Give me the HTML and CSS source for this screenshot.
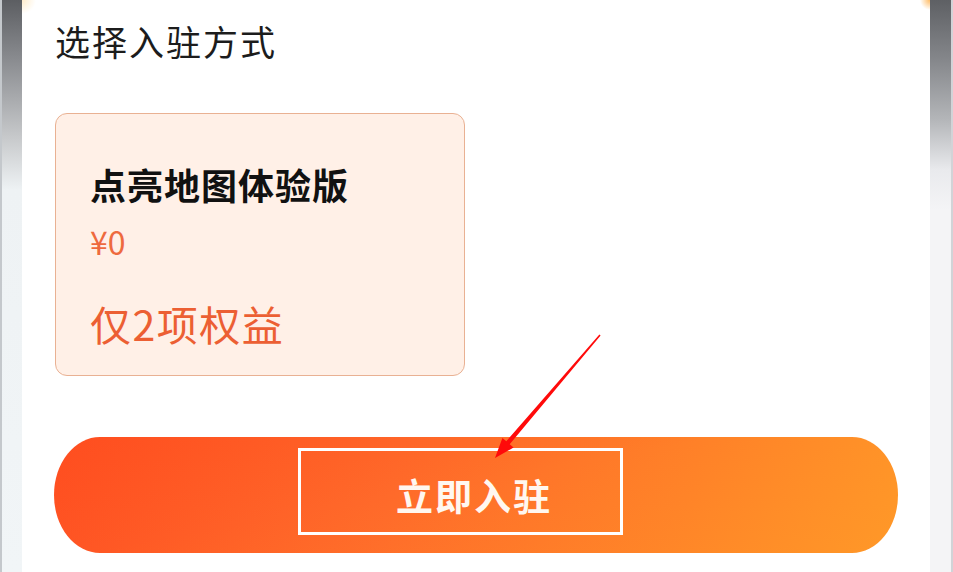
FILE: index.html
```html
<!DOCTYPE html>
<html lang="zh-CN">
<head>
<meta charset="utf-8">
<title>选择入驻方式</title>
<link rel="stylesheet" href="styles.css">
</head>
<body>
<div class="screen">
  <div class="edge edge-left"></div>
  <main class="sheet">
    <h1 class="title">选择入驻方式</h1>
    <div class="plans">
      <div class="plan">
        <div class="plan-name">点亮地图体验版</div>
        <div class="plan-price">¥0</div>
        <div class="plan-note">仅2项权益</div>
      </div>
    </div>
    <button class="cta">
      <span class="cta-text">立即入驻</span>
      <span class="highlight-box"></span>
    </button>
  </main>
  <div class="edge edge-right"></div>
  <svg class="arrow" width="953" height="572" viewBox="0 0 953 572">
    <polygon fill="#ff0a0a" points="495,458 502.4,438.0 506.3,441.3 599.4,334.4 600.6,335.4 509.7,444.3 513.6,447.6"/>
  </svg>
</div>
</body>
</html>
```
FILE: styles.css
```css
* { box-sizing: border-box; }
html, body {
  margin: 0;
  padding: 0;
  width: 953px;
  height: 572px;
  overflow: hidden;
  background: #ffffff;
  font-family: "Noto Sans CJK SC", "Noto Sans", sans-serif;
}
.screen {
  position: relative;
  display: flex;
  width: 953px;
  height: 572px;
}
.edge {
  flex: none;
  height: 572px;
}
.edge-left {
  width: 22px;
  background: linear-gradient(180deg, #5c5e62 0px, #8a8c90 60px, #c9cbcd 140px, #eef2f4 190px, #f1f5f7 572px);
  border-left: 2px solid #c4c8cc;
}
.edge-right {
  width: 23px;
  background: linear-gradient(180deg, #5e6064 0px, #85878b 60px, #b4b6b9 120px, #e9eaed 170px, #f4f4f6 210px, #f4f4f6 572px);
  border-right: 2px solid #d2d3d7;
}
.sheet {
  flex: 1;
  display: flex;
  flex-direction: column;
  padding: 21px 32px 0 33px;
  background:
    radial-gradient(circle at 0 0, rgba(255, 214, 140, 0.45) 0, rgba(255, 240, 210, 0) 14px),
    radial-gradient(circle at 100% 0, rgba(255, 170, 60, 0.8) 0, rgba(255, 230, 190, 0) 10px),
    #ffffff;
}
.title {
  margin: 0;
  font-size: 35px;
  line-height: 40px;
  font-weight: 400;
  letter-spacing: 2px;
  color: #1c1c1c;
}
.plans {
  display: flex;
  margin-top: 52px;
}
.plan {
  width: 410px;
  height: 263px;
  padding: 48px 20px 0 34px;
  background: #fff0e7;
  border: 1.5px solid #e9b193;
  border-radius: 12px;
}
.plan-name {
  font-size: 36px;
  line-height: 44px;
  font-weight: 700;
  color: #111111;
  letter-spacing: 1px;
}
.plan-price {
  margin-top: 16px;
  font-size: 32px;
  line-height: 38px;
  color: #ee6a3e;
}
.plan-note {
  margin-top: 39px;
  font-size: 41px;
  line-height: 48px;
  color: #ec5f33;
  letter-spacing: 1.5px;
}
.cta {
  position: relative;
  display: flex;
  align-items: center;
  justify-content: center;
  margin: 61px 0 0 -1px;
  height: 116px;
  border: none;
  padding: 0;
  border-radius: 46px / 58px;
  background:
    linear-gradient(170deg, rgba(255, 60, 20, 0.25) 0%, rgba(255, 60, 20, 0) 45%, rgba(255, 170, 40, 0.2) 100%),
    linear-gradient(100deg, #ff5323 0%, #ff6a2a 40%, #ff8128 75%, #ff9428 100%);
  font-family: inherit;
}
.cta-text {
  font-size: 37px;
  line-height: 44px;
  font-weight: 700;
  color: #fff7f0;
  letter-spacing: 2px;
  margin-right: 4px;
}
.highlight-box {
  position: absolute;
  left: 244px;
  top: 11px;
  width: 325px;
  height: 87px;
  border: 3px solid #ffffff;
}
.arrow {
  position: absolute;
  left: 0;
  top: 0;
  pointer-events: none;
}
```
